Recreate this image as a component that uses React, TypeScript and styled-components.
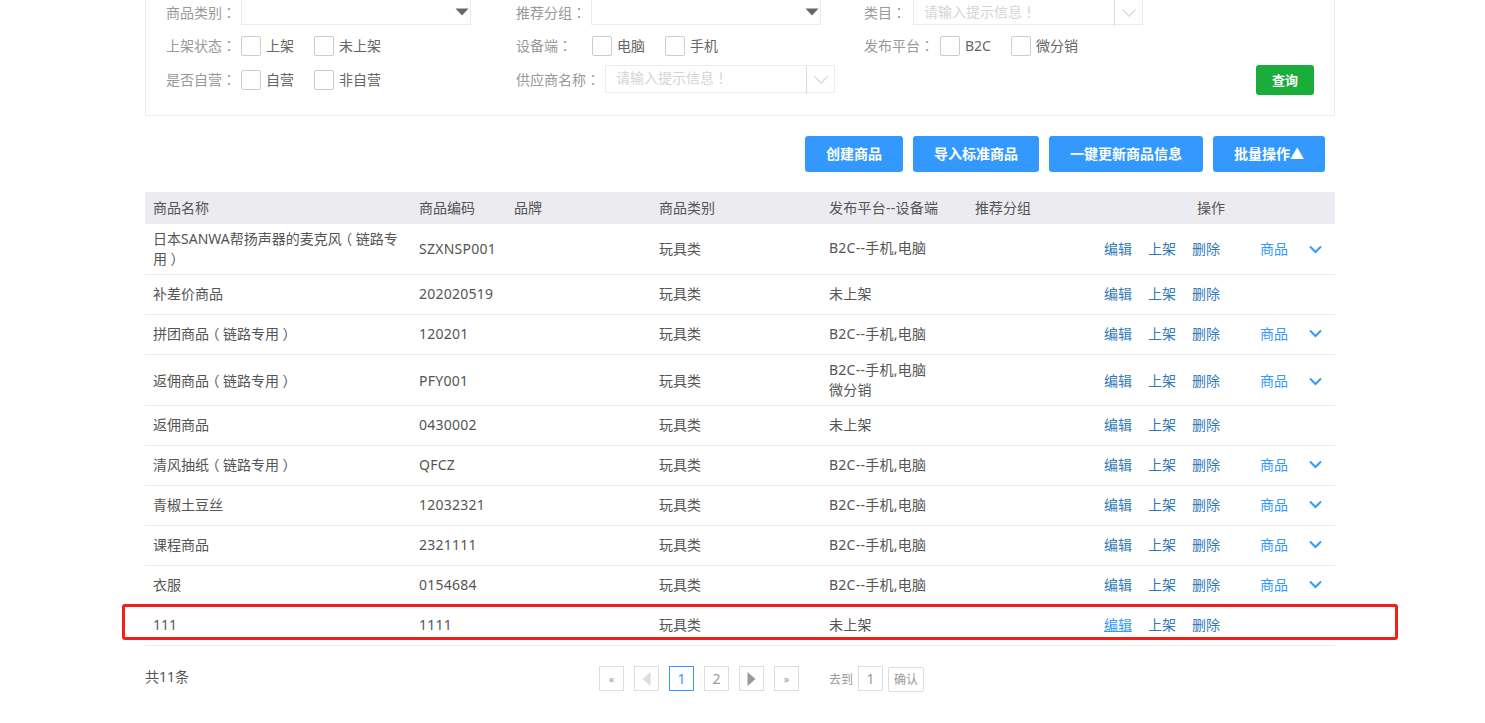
import styled, { createGlobalStyle } from 'styled-components'

const GlobalStyle = createGlobalStyle`
    html, body {
        margin: 0;
        padding: 0;
        background: #fff;
        overflow: hidden;
    }
    body {
        font-family: "Noto Sans", "Noto Sans CJK SC", sans-serif;
        font-size: 14px;
        color: #555;
    }
`

const Page = styled.div`
    width: 1190px;
    margin-left: 145px;
`

const Punct = styled.span`
    font-family: "Noto Sans CJK TC", sans-serif;
`

const Paren = styled.span`
    display: inline-block;
    width: 14px;
    text-align: center;
    font-feature-settings: "halt";
`

const FilterPanel = styled.div`
    display: flex;
    flex-direction: column;
    gap: 10px;
    padding: 0 20px 20px 20px;
    border: 1px solid #ebebeb;
    border-top: none;
    box-sizing: border-box;
    height: 116px;
`

const FilterRow = styled.div<{ $h: number }>`
    display: grid;
    grid-template-columns: 350px 348px 1fr;
    height: ${p => p.$h}px;
`

const FilterCell = styled.div`
    display: flex;
    align-items: center;
`

const FilterLabel = styled.span<{ $w?: number }>`
    flex: none;
    width: ${p => (p.$w ? `${p.$w}px` : 'auto')};
    margin-right: ${p => (p.$w ? 0 : 5)}px;
    padding-bottom: 2px;
    color: #999;
    white-space: nowrap;
`

const SelectBox = styled.div`
    display: flex;
    align-items: center;
    justify-content: flex-end;
    width: 230px;
    height: 25px;
    padding-right: 1px;
    border: 1px solid #ebebeb;
    border-top: none;
    box-sizing: border-box;
`

const InputGroup = styled.div<{ $top?: boolean }>`
    display: flex;
    width: 230px;
    height: ${p => (p.$top ? 25 : 28)}px;
    margin-bottom: ${p => (p.$top ? 0 : 2)}px;
    border: 1px solid #ebebeb;
    border-top: ${p => (p.$top ? 'none' : '1px solid #ebebeb')};
    box-sizing: border-box;
`

const InputText = styled.div`
    flex: 1;
    padding-left: 10px;
    line-height: 23px;
    color: #d4d4d4;
    white-space: nowrap;
`

const InputArrow = styled.div`
    display: flex;
    align-items: center;
    justify-content: center;
    flex: none;
    width: 28px;
    margin-bottom: -2px;
    border-left: 1px solid #dcdcdc;
    box-sizing: border-box;
`

const CheckItem = styled.label<{ $w: number }>`
    display: flex;
    align-items: center;
    width: ${p => p.$w}px;
    color: #666;
    white-space: nowrap;
`

const CheckBox = styled.span`
    flex: none;
    width: 20px;
    height: 20px;
    margin-right: 5px;
    border: 1px solid #ccc;
    border-radius: 2px;
    box-sizing: border-box;
`

const CheckText = styled.span`
    padding-bottom: 2px;
`

const QueryCell = styled.div`
    display: flex;
    align-items: center;
    justify-content: flex-end;
`

const QueryBtn = styled.button`
    width: 58px;
    height: 30px;
    padding: 0 0 2px 0;
    border: none;
    border-radius: 3px;
    background: #1aad3c;
    color: #fff;
    font: 700 13px "Noto Sans", "Noto Sans CJK SC", sans-serif;
`

const ActionBar = styled.div`
    display: flex;
    justify-content: flex-end;
    gap: 10px;
    padding: 20px 10px 20px 0;
`

const ActionBtn = styled.button<{ $w: number }>`
    width: ${p => p.$w}px;
    height: 36px;
    padding: 0 0 2px 0;
    border: none;
    border-radius: 3px;
    background: #3399ff;
    color: #fff;
    font: 700 14px "Noto Sans", "Noto Sans CJK SC", sans-serif;
    white-space: nowrap;
`

const COLUMNS = '266px 95px 145px 170px 146px 129px 1fr'

const TableHead = styled.div`
    display: grid;
    grid-template-columns: ${COLUMNS};
    align-items: center;
    height: 30px;
    padding: 0 0 2px 8px;
    background: #ebebf0;
`

const HeadOps = styled.span`
    padding-left: 93px;
`

const WideText = styled.span`
    letter-spacing: 0.25px;
`

const Row = styled.div`
    position: relative;
    display: grid;
    grid-template-columns: ${COLUMNS};
    align-items: center;
    height: 40px;
    box-sizing: border-box;
    padding: 0 0 2px 8px;
    border-bottom: 1px solid #ececec;
    line-height: 20px;
`

const TallRow = styled(Row)`
    height: 51px;
    padding-top: 5px;
    padding-bottom: 5px;
`

const NameCell = styled.div`
    width: 250px;
`

const CodeCell = styled.div`
    letter-spacing: 0.25px;
`

const PlatformCell = styled.div<{ $tall?: boolean }>`
    padding-bottom: ${p => (p.$tall ? 2 : 0)}px;
    letter-spacing: 0.25px;
`

const Ops = styled.div`
    display: flex;
    align-items: center;
`

const OpLink = styled.a<{ $hover?: boolean }>`
    margin-right: 16px;
    color: ${p => (p.$hover ? '#3399ff' : '#337ab7')};
    text-decoration: ${p => (p.$hover ? 'underline' : 'none')};
    white-space: nowrap;
`

const GoodsLink = styled.a`
    margin-left: 24px;
    margin-right: 21px;
    color: #3399ff;
    white-space: nowrap;
`

const Highlight = styled.div`
    position: absolute;
    top: -2px;
    left: -23px;
    width: 1276px;
    height: 36px;
    border: 3px solid #f0201a;
    border-radius: 3px;
    box-sizing: border-box;
    pointer-events: none;
`

const Footer = styled.div`
    display: flex;
    align-items: flex-start;
    margin-top: 20px;
`

const Total = styled.div`
    width: 454px;
    line-height: 22px;
    color: #555;
`

const Pager = styled.div`
    display: flex;
    align-items: flex-start;
    gap: 10px;
`

const PageBox = styled.div<{ $active?: boolean; $small?: boolean }>`
    display: flex;
    align-items: center;
    justify-content: center;
    width: 25px;
    height: 25px;
    border: 1px solid ${p => (p.$active ? '#3399ff' : '#ddd')};
    box-sizing: border-box;
    color: ${p => (p.$active ? '#3399ff' : '#999')};
    font-size: ${p => (p.$small ? 11 : 14)}px;
`

const GoTo = styled.div`
    display: flex;
    align-items: flex-start;
    margin-left: 20px;
`

const GoToLabel = styled.span`
    width: 29px;
    line-height: 27px;
    font-size: 12px;
    color: #999;
    white-space: nowrap;
`

const ConfirmBtn = styled.div`
    width: 36px;
    height: 25px;
    margin-top: 1px;
    margin-left: 5px;
    border: 1px solid #ddd;
    border-radius: 2px;
    box-sizing: border-box;
    line-height: 23px;
    text-align: center;
    font-size: 12px;
    color: #999;
`

const Caret = () => (
    <svg width="14" height="8" viewBox="0 0 14 8">
        <path d="M0.5 0.5H13.5L7 7.5Z" fill="#666" />
    </svg>
)

const ChevronGrey = () => (
    <svg width="16" height="10" viewBox="0 0 16 10">
        <path d="M1.5 1.5L8 8L14.5 1.5" fill="none" stroke="#ddd" strokeWidth="1.5" />
    </svg>
)

const ChevronBlue = () => (
    <svg width="13" height="9" viewBox="0 0 13 9">
        <path d="M1 1.5L6.5 7L12 1.5" fill="none" stroke="#3399ff" strokeWidth="2" />
    </svg>
)

const TriangleLeft = () => (
    <svg width="9" height="14" viewBox="0 0 9 14">
        <path d="M8.5 0V14L0.5 7Z" fill="#ddd" />
    </svg>
)

const TriangleRight = () => (
    <svg width="9" height="14" viewBox="0 0 9 14">
        <path d="M0.5 0V14L8.5 7Z" fill="#999" />
    </svg>
)

const Select = () => (
    <SelectBox>
        <Caret />
    </SelectBox>
)

const HintInput = ({ top }: { top?: boolean }) => (
    <InputGroup $top={top}>
        <InputText>请输入提示信息<Punct>！</Punct></InputText>
        <InputArrow>
            <ChevronGrey />
        </InputArrow>
    </InputGroup>
)

const Check = ({ text, w }: { text: string; w: number }) => (
    <CheckItem $w={w}>
        <CheckBox />
        <CheckText>{text}</CheckText>
    </CheckItem>
)

const Label = ({ text, w }: { text: string; w?: number }) => (
    <FilterLabel $w={w}>
        {text}
        <Punct>：</Punct>
    </FilterLabel>
)

// 全角括号要居中显示
const ProductName = ({ name }: { name: string }) => (
    <NameCell>
        {name.split(/([（）])/).map((part, i) =>
            part === '（' || part === '）' ? <Paren key={i}>{part}</Paren> : part
        )}
    </NameCell>
)

type Product = {
    name: string
    code: string
    platform: string[]
    goods: boolean
    tall?: boolean
    marked?: boolean
}

const products: Product[] = [
    { name: '日本SANWA帮扬声器的麦克风（链路专用）', code: 'SZXNSP001', platform: ['B2C--手机,电脑'], goods: true, tall: true },
    { name: '补差价商品', code: '202020519', platform: ['未上架'], goods: false },
    { name: '拼团商品（链路专用）', code: '120201', platform: ['B2C--手机,电脑'], goods: true },
    { name: '返佣商品（链路专用）', code: 'PFY001', platform: ['B2C--手机,电脑', '微分销'], goods: true, tall: true },
    { name: '返佣商品', code: '0430002', platform: ['未上架'], goods: false },
    { name: '清风抽纸（链路专用）', code: 'QFCZ', platform: ['B2C--手机,电脑'], goods: true },
    { name: '青椒土豆丝', code: '12032321', platform: ['B2C--手机,电脑'], goods: true },
    { name: '课程商品', code: '2321111', platform: ['B2C--手机,电脑'], goods: true },
    { name: '衣服', code: '0154684', platform: ['B2C--手机,电脑'], goods: true },
    { name: '111', code: '1111', platform: ['未上架'], goods: false, marked: true },
]

const ProductRow = ({ item }: { item: Product }) => {
    const Wrap = item.tall ? TallRow : Row
    return (
        <Wrap>
            <ProductName name={item.name} />
            <CodeCell>{item.code}</CodeCell>
            <div />
            <div>玩具类</div>
            <PlatformCell $tall={item.tall}>
                {item.platform.map(line => (
                    <div key={line}>{line}</div>
                ))}
            </PlatformCell>
            <div />
            <Ops>
                <OpLink $hover={item.marked}>编辑</OpLink>
                <OpLink>上架</OpLink>
                <OpLink>删除</OpLink>
                {item.goods && <GoodsLink>商品</GoodsLink>}
                {item.goods && <ChevronBlue />}
            </Ops>
            {item.marked && <Highlight />}
        </Wrap>
    )
}

export default function App() {
    return (
        <Page>
            <GlobalStyle />
            <FilterPanel>
                <FilterRow $h={25}>
                    <FilterCell>
                        <Label text="商品类别" />
                        <Select />
                    </FilterCell>
                    <FilterCell>
                        <Label text="推荐分组" />
                        <Select />
                    </FilterCell>
                    <FilterCell>
                        <Label text="类目" w={49} />
                        <HintInput top />
                    </FilterCell>
                </FilterRow>
                <FilterRow $h={20}>
                    <FilterCell>
                        <Label text="上架状态" />
                        <Check text="上架" w={73} />
                        <Check text="未上架" w={80} />
                    </FilterCell>
                    <FilterCell>
                        <Label text="设备端" w={76} />
                        <Check text="电脑" w={73} />
                        <Check text="手机" w={60} />
                    </FilterCell>
                    <FilterCell>
                        <Label text="发布平台" w={76} />
                        <Check text="B2C" w={71} />
                        <Check text="微分销" w={80} />
                    </FilterCell>
                </FilterRow>
                <FilterRow $h={30}>
                    <FilterCell>
                        <Label text="是否自营" />
                        <Check text="自营" w={73} />
                        <Check text="非自营" w={80} />
                    </FilterCell>
                    <FilterCell>
                        <Label text="供应商名称" />
                        <HintInput />
                    </FilterCell>
                    <QueryCell>
                        <QueryBtn>查询</QueryBtn>
                    </QueryCell>
                </FilterRow>
            </FilterPanel>

            <ActionBar>
                <ActionBtn $w={98}>创建商品</ActionBtn>
                <ActionBtn $w={126}>导入标准商品</ActionBtn>
                <ActionBtn $w={154}>一键更新商品信息</ActionBtn>
                <ActionBtn $w={112}>批量操作▲</ActionBtn>
            </ActionBar>

            <TableHead>
                <span>商品名称</span>
                <span>商品编码</span>
                <span>品牌</span>
                <span>商品类别</span>
                <WideText>发布平台--设备端</WideText>
                <span>推荐分组</span>
                <HeadOps>操作</HeadOps>
            </TableHead>
            {products.map(item => (
                <ProductRow key={item.code} item={item} />
            ))}

            <Footer>
                <Total>共11条</Total>
                <Pager>
                    <PageBox $small>«</PageBox>
                    <PageBox><TriangleLeft /></PageBox>
                    <PageBox $active>1</PageBox>
                    <PageBox>2</PageBox>
                    <PageBox><TriangleRight /></PageBox>
                    <PageBox $small>»</PageBox>
                    <GoTo>
                        <GoToLabel>去到</GoToLabel>
                        <PageBox>1</PageBox>
                        <ConfirmBtn>确认</ConfirmBtn>
                    </GoTo>
                </Pager>
            </Footer>
        </Page>
    )
}
